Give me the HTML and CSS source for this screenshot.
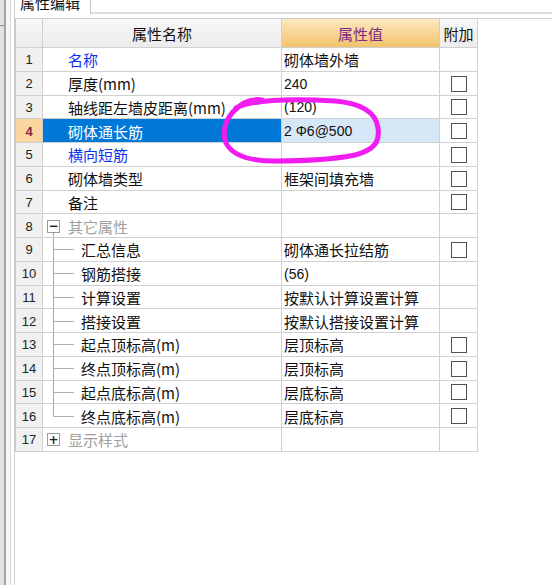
FILE: index.html
```html
<!DOCTYPE html>
<html lang="zh-CN">
<head>
<meta charset="utf-8">
<title>属性编辑</title>
<link rel="stylesheet" href="styles.css">
</head>
<body>
<div class="page">
  <div class="sidebar"></div>
  <div class="panel">
    <div class="tabs">
      <div class="tab"><span class="tab-label">属性编辑</span></div>
      <div class="tab-rest"></div>
    </div>
    <div class="gridbox">
      <div class="grid">
        <div class="c num hdr"></div>
        <div class="c hdr center">属性名称</div>
        <div class="c hdr hdr-val center">属性值</div>
        <div class="c hdr center">附加</div>

        <div class="c num">1</div>
        <div class="c name"><span class="txt blue">名称</span></div>
        <div class="c val">砌体墙外墙</div>
        <div class="c att"></div>

        <div class="c num">2</div>
        <div class="c name"><span class="txt">厚度(mm)</span></div>
        <div class="c val lat">240</div>
        <div class="c att"><span class="cb"></span></div>

        <div class="c num">3</div>
        <div class="c name"><span class="txt">轴线距左墙皮距离(mm)</span></div>
        <div class="c val lat">(120)</div>
        <div class="c att"><span class="cb"></span></div>

        <div class="c num sel-num">4</div>
        <div class="c name sel-name"><span class="txt">砌体通长筋</span></div>
        <div class="c val sel-val lat">2 Φ6@500</div>
        <div class="c att"><span class="cb"></span></div>

        <div class="c num">5</div>
        <div class="c name"><span class="txt blue">横向短筋</span></div>
        <div class="c val"></div>
        <div class="c att"><span class="cb"></span></div>

        <div class="c num">6</div>
        <div class="c name"><span class="txt">砌体墙类型</span></div>
        <div class="c val">框架间填充墙</div>
        <div class="c att"><span class="cb"></span></div>

        <div class="c num">7</div>
        <div class="c name"><span class="txt">备注</span></div>
        <div class="c val"></div>
        <div class="c att"><span class="cb"></span></div>

        <div class="c num">8</div>
        <div class="c name"><span class="node open"><span class="box">−</span></span><span class="gray">其它属性</span></div>
        <div class="c val"></div>
        <div class="c att"></div>

        <div class="c num">9</div>
        <div class="c name"><span class="branch"></span><span>汇总信息</span></div>
        <div class="c val">砌体通长拉结筋</div>
        <div class="c att"><span class="cb"></span></div>

        <div class="c num">10</div>
        <div class="c name"><span class="branch"></span><span>钢筋搭接</span></div>
        <div class="c val lat">(56)</div>
        <div class="c att"></div>

        <div class="c num">11</div>
        <div class="c name"><span class="branch"></span><span>计算设置</span></div>
        <div class="c val">按默认计算设置计算</div>
        <div class="c att"></div>

        <div class="c num">12</div>
        <div class="c name"><span class="branch"></span><span>搭接设置</span></div>
        <div class="c val">按默认搭接设置计算</div>
        <div class="c att"></div>

        <div class="c num">13</div>
        <div class="c name"><span class="branch"></span><span>起点顶标高(m)</span></div>
        <div class="c val">层顶标高</div>
        <div class="c att"><span class="cb"></span></div>

        <div class="c num">14</div>
        <div class="c name"><span class="branch"></span><span>终点顶标高(m)</span></div>
        <div class="c val">层顶标高</div>
        <div class="c att"><span class="cb"></span></div>

        <div class="c num">15</div>
        <div class="c name"><span class="branch"></span><span>起点底标高(m)</span></div>
        <div class="c val">层底标高</div>
        <div class="c att"><span class="cb"></span></div>

        <div class="c num">16</div>
        <div class="c name"><span class="branch last"></span><span>终点底标高(m)</span></div>
        <div class="c val">层底标高</div>
        <div class="c att"><span class="cb"></span></div>

        <div class="c num">17</div>
        <div class="c name"><span class="node"><span class="box">+</span></span><span class="gray">显示样式</span></div>
        <div class="c val"></div>
        <div class="c att"></div>
      </div>
    </div>
  </div>
</div>
<svg class="annot" width="552" height="585" viewBox="0 0 552 585" aria-hidden="true">
  <path d="M 236,108 C 256,98 300,99 335,101 C 360,103 376,112 378,128 C 380,142 374,150 355,155 C 330,160 300,161 275,161 C 250,161 232,155 226,143 C 221,130 226,114 244,103 C 250,100 256,99 262,100" />
</svg>
</body>
</html>
```

FILE: styles.css
```css
html, body {
  margin: 0;
  padding: 0;
  background: #ffffff;
}

body {
  position: relative;
  width: 552px;
  height: 585px;
  overflow: hidden;
  font-family: "Noto Sans CJK SC", "Noto Sans", sans-serif;
  font-size: 15px;
  color: #111;
}

.page {
  display: flex;
  height: 585px;
}

.sidebar {
  width: 15px;
  flex: none;
  background:
    linear-gradient(#8c8c8c, #8c8c8c) no-repeat 0 25px / 4px 1px,
    linear-gradient(to right,
      #e2e2e2 0, #e2e2e2 4px,
      #a4a4a4 4px, #a4a4a4 6px,
      #f6f6f6 6px, #f6f6f6 10px,
      #dadada 10px, #dadada 11px,
      #ffffff 11px, #ffffff 14px,
      #cfcfcf 14px, #cfcfcf 15px);
}

.panel {
  flex: 1;
  display: flex;
  flex-direction: column;
}

.tabs {
  display: flex;
  height: 14px;
}

.tab {
  width: 75px;
  flex: none;
  border-right: 1px solid #c4c4c4;
  overflow: hidden;
}

.tab-label {
  display: block;
  margin-top: -6px;
  margin-left: 5px;
  line-height: 18px;
  font-size: 15px;
  color: #111;
}

.tab-rest {
  flex: 1;
  border-bottom: 2px solid #dcdcdc;
  height: 12px;
}

.gridbox {
  margin-top: 4px;
  border-top: 1px solid #cdcdcd;
}

.grid {
  display: grid;
  grid-template-columns: 27px 239px 158px 38px;
  grid-template-rows: 29px repeat(17, 23.76px);
  width: 463px;
  border-left: 1px solid #c8c8c8;
}

.c {
  border-right: 1px solid #d0d0d0;
  border-bottom: 1px solid #d0d0d0;
  display: flex;
  align-items: center;
  overflow: hidden;
  white-space: nowrap;
  padding-top: 1px;
  box-sizing: border-box;
}

.hdr {
  background: linear-gradient(#f7f7f7, #ececec);
  padding-top: 0;
}

.hdr-val {
  background: linear-gradient(#fde9c0, #f2c26c);
  color: #7a2a86;
}

.center {
  justify-content: center;
}

.num {
  background: #f0f0f0;
  justify-content: center;
  font-family: "Liberation Sans", "DejaVu Sans", sans-serif;
  font-size: 13px;
  color: #222;
}

.num.hdr {
  background: linear-gradient(#f7f7f7, #ececec);
}

.name {
  padding-left: 25px;
}

.val {
  padding-left: 2px;
}

.lat {
  font-family: "Liberation Sans", "Noto Sans CJK SC", sans-serif;
  font-size: 14px;
}

.att {
  justify-content: center;
}

.blue {
  color: #1030f0;
}

.gray {
  color: #a0a0a0;
}

.sel-num {
  background: #fbd7a0;
  color: #8a1d46;
  font-weight: bold;
}

.sel-name {
  background: #0078d7;
  color: #ffffff;
}

.sel-val {
  background: #d6e7f7;
}

.cb {
  width: 16px;
  height: 16px;
  box-sizing: border-box;
  border: 1px solid #505050;
  background: #ffffff;
}

/* tree */
.node {
  align-self: stretch;
  width: 13px;
  margin-left: -21px;
  margin-right: 8px;
  display: flex;
  align-items: center;
  justify-content: center;
}

.node.open {
  background: linear-gradient(#a8a8a8, #a8a8a8) no-repeat 6px 100% / 1px 50%;
}

.box {
  width: 13px;
  height: 13px;
  box-sizing: border-box;
  border: 1px solid #9c9c9c;
  background: #ffffff;
  display: flex;
  align-items: center;
  justify-content: center;
  font-family: "DejaVu Sans", sans-serif;
  font-size: 12px;
  line-height: 1;
  color: #222;
  font-weight: bold;
}

.branch {
  align-self: stretch;
  width: 28px;
  margin-left: -15px;
  margin-top: -1px;
  margin-bottom: -1px;
  flex: none;
  background:
    linear-gradient(#a8a8a8, #a8a8a8) no-repeat 0 0 / 1px 100%,
    linear-gradient(#b0b0b0, #b0b0b0) no-repeat 0 50% / 21px 1px;
}

.branch.last {
  background:
    linear-gradient(#a8a8a8, #a8a8a8) no-repeat 0 0 / 1px 50%,
    linear-gradient(#b0b0b0, #b0b0b0) no-repeat 0 50% / 21px 1px;
}

.annot {
  position: absolute;
  left: 0;
  top: 0;
  pointer-events: none;
}

.annot path {
  fill: none;
  stroke: #f01cf0;
  stroke-width: 5;
  stroke-linecap: round;
  stroke-linejoin: round;
}
```
